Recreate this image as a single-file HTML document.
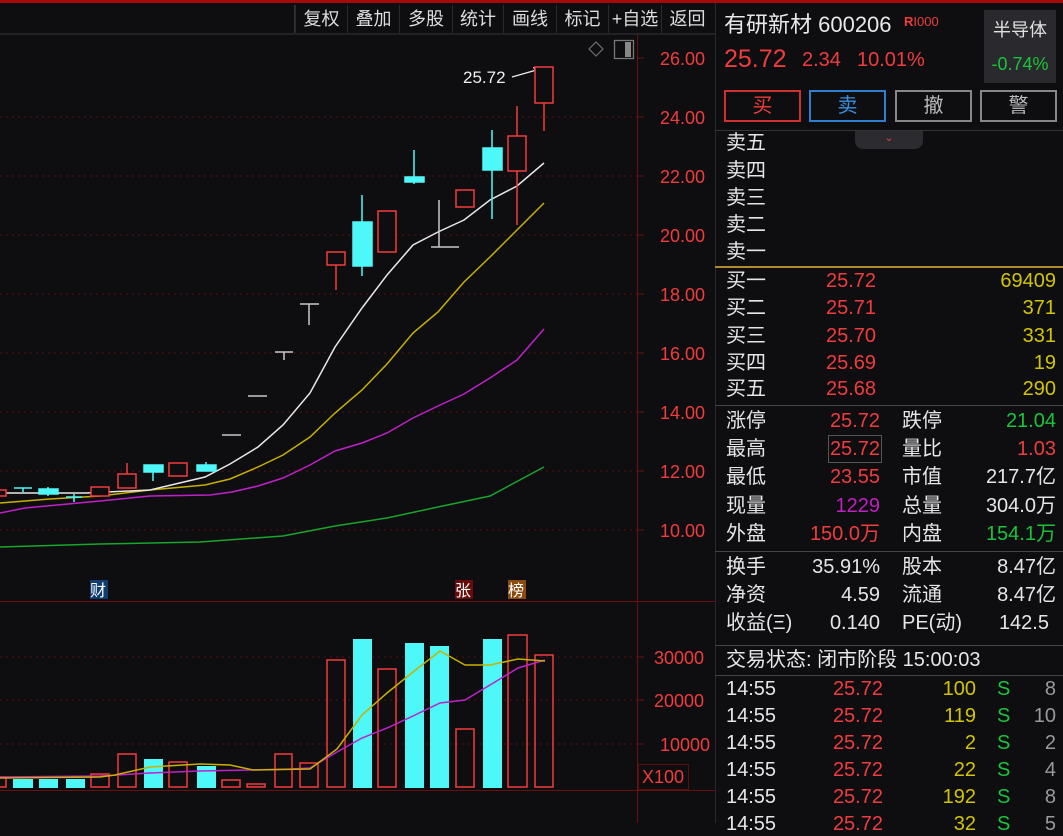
<!DOCTYPE html>
<html><head><meta charset="utf-8"><style>
*{margin:0;padding:0;box-sizing:border-box}
body{width:1063px;height:823px;background:#0e0e11;overflow:hidden;position:relative;font-family:"Liberation Sans","Noto Sans CJK SC",sans-serif;color:#e6e6e6}
.a{position:absolute;white-space:nowrap}
.r{color:#f03c3c}.g{color:#19c43a}.y{color:#d2c400}.w{color:#e6e6e6}.m{color:#c020c0}.gr{color:#9a9a9a}
.row{position:absolute;left:726px;font-size:20px;line-height:24px;height:24px;width:330px}
.row span{position:absolute;top:0}
.tb{position:absolute;top:5px;height:28px;font-size:18px;line-height:28px;color:#ddd;text-align:center;border-left:1px solid #2a2a2e}
.btn{position:absolute;top:90px;height:32px;font-size:20px;line-height:28px;text-align:center;border:2px solid}
</style></head><body>
<div class="a" style="left:0;top:0;width:1063px;height:3px;background:#a50b0b"></div>
<!-- toolbar -->
<div class="a" style="left:0;top:33px;width:715px;height:2px;background:#222226"></div>
<div class="a" style="left:294px;top:5px;width:1px;height:28px;background:#333"></div>
<div class="tb" style="left:295px;width:52px">复权</div>
<div class="tb" style="left:347px;width:52px">叠加</div>
<div class="tb" style="left:399px;width:53px">多股</div>
<div class="tb" style="left:452px;width:51px">统计</div>
<div class="tb" style="left:503px;width:53px">画线</div>
<div class="tb" style="left:556px;width:52px">标记</div>
<div class="tb" style="left:608px;width:53px">+自选</div>
<div class="tb" style="left:661px;width:52px">返回</div>
<div class="a" style="left:715px;top:3px;width:1px;height:820px;background:#2a2a2e"></div>

<svg class="a" style="left:0;top:0" width="715" height="823">
<g stroke="#5a0f0f" stroke-dasharray="2,4" stroke-width="1">
<line x1="0" y1="117" x2="637" y2="117"/><line x1="0" y1="176" x2="637" y2="176"/><line x1="0" y1="235" x2="637" y2="235"/><line x1="0" y1="294" x2="637" y2="294"/><line x1="0" y1="353" x2="637" y2="353"/><line x1="0" y1="412" x2="637" y2="412"/><line x1="0" y1="471" x2="637" y2="471"/><line x1="0" y1="530" x2="637" y2="530"/>
<line x1="0" y1="657" x2="637" y2="657"/><line x1="0" y1="700" x2="637" y2="700"/><line x1="0" y1="744" x2="637" y2="744"/>
</g>
<line x1="637.5" y1="35" x2="637.5" y2="823" stroke="#6a1010"/>
<line x1="0" y1="601.5" x2="715" y2="601.5" stroke="#6a1010"/>
<line x1="0" y1="790.5" x2="715" y2="790.5" stroke="#6a1010"/>
<g stroke="#6a1010"><line x1="638" y1="58" x2="644" y2="58"/><line x1="638" y1="117" x2="644" y2="117"/><line x1="638" y1="176" x2="644" y2="176"/><line x1="638" y1="235" x2="644" y2="235"/><line x1="638" y1="294" x2="644" y2="294"/><line x1="638" y1="353" x2="644" y2="353"/><line x1="638" y1="412" x2="644" y2="412"/><line x1="638" y1="471" x2="644" y2="471"/><line x1="638" y1="530" x2="644" y2="530"/><line x1="638" y1="657" x2="644" y2="657"/><line x1="638" y1="700" x2="644" y2="700"/><line x1="638" y1="744" x2="644" y2="744"/></g>
<rect x="638.5" y="764.5" width="50" height="25" fill="none" stroke="#5a0f0f"/>
<g fill="#f03c3c" font-size="18" font-family="Liberation Sans,sans-serif">
<text x="660" y="65">26.00</text><text x="660" y="124">24.00</text><text x="660" y="183">22.00</text><text x="660" y="242">20.00</text><text x="660" y="301">18.00</text><text x="660" y="360">16.00</text><text x="660" y="419">14.00</text><text x="660" y="478">12.00</text><text x="660" y="537">10.00</text>
<text x="654" y="664">30000</text><text x="654" y="707">20000</text><text x="660" y="751">10000</text><text x="642" y="783">X100</text>
</g>
<!-- icons -->
<path d="M596 42 L603 49 L596 56 L589 49 Z" fill="none" stroke="#666" stroke-width="1.3"/>
<rect x="614.5" y="40.5" width="19" height="18" fill="none" stroke="#777" stroke-width="1.3"/><rect x="625" y="42" width="6" height="15" fill="#888"/>
<text x="463" y="83" fill="#eee" font-size="17" font-family="Liberation Sans,sans-serif">25.72</text>
<path d="M512 77 L540 69" stroke="#eee" stroke-width="1.2"/><path d="M533 67 L542 68 L536 74" fill="#eee"/>
<!-- MA lines -->
<polyline fill="none" stroke="#18a52c" stroke-width="1.5" points="0,547 100,544 200,542 283,536 335,526 387,518 438,507 490,496 544,467"/>
<polyline fill="none" stroke="#c020c8" stroke-width="1.5" points="0,513 25,508 100,501 150,496 210,495 232,492 258,486 283,478 310,465 335,451 362,443 387,433 413,418 438,406 464,394 490,378 517,360 544,329"/>
<polyline fill="none" stroke="#c8b000" stroke-width="1.5" points="0,503 50,499 100,496 150,490 205,485 230,479 258,467 283,455 310,437 335,413 362,390 387,364 413,333 438,312 464,282 490,257 517,230 544,203"/>
<polyline fill="none" stroke="#e8e8e8" stroke-width="1.5" points="0,493 86,493 150,490 205,477 230,464 258,447 283,425 310,393 335,347 362,308 387,275 413,245 438,232 464,220 490,200 517,186 544,163"/>
<!-- candles -->
<g stroke="#f03c3c" fill="#0e0e11" stroke-width="1.5">
<rect x="-2" y="490" width="8" height="6"/>
<rect x="91" y="487" width="18" height="9"/>
<line x1="127" y1="463" x2="127" y2="474"/><rect x="118" y="474" width="18" height="14"/>
<rect x="169" y="463" width="18" height="13"/>
<line x1="336" y1="265" x2="336" y2="290"/><rect x="327" y="252" width="18" height="13"/>
<rect x="378" y="211" width="18" height="41"/>
<rect x="456" y="190" width="18" height="17"/>
<line x1="517" y1="106" x2="517" y2="136"/><line x1="517" y1="171" x2="517" y2="225"/><rect x="508" y="136" width="18" height="35"/>
<line x1="544" y1="103" x2="544" y2="131"/><rect x="535" y="67" width="18" height="36"/>
</g>
<g stroke="#4ef8f8" fill="#4ef8f8" stroke-width="1.5">
<line x1="14" y1="488" x2="32" y2="488"/><line x1="23" y1="488" x2="23" y2="492"/>
<rect x="39" y="489" width="19" height="5"/><line x1="48" y1="487" x2="48" y2="496"/>
<line x1="66" y1="497" x2="82" y2="497"/><line x1="74" y1="494" x2="74" y2="502"/>
<rect x="144" y="465" width="19" height="7"/><line x1="153" y1="472" x2="153" y2="481"/>
<rect x="197" y="465" width="19" height="6"/><line x1="206" y1="462" x2="206" y2="471"/>
<rect x="353" y="222" width="19" height="44"/><line x1="362" y1="195" x2="362" y2="276"/>
<rect x="405" y="177" width="19" height="5"/><line x1="414" y1="150" x2="414" y2="184"/>
<rect x="483" y="148" width="19" height="22"/><line x1="492" y1="130" x2="492" y2="219"/>
</g>
<g stroke="#c8c8c8" stroke-width="1.5">
<line x1="222" y1="435" x2="241" y2="435"/><line x1="248" y1="396" x2="267" y2="396"/>
<line x1="275" y1="352" x2="293" y2="352"/><line x1="284" y1="352" x2="284" y2="360"/>
<line x1="300" y1="304" x2="319" y2="304"/><line x1="309" y1="304" x2="309" y2="325"/>
<line x1="439" y1="200" x2="439" y2="247"/><line x1="431" y1="247" x2="459" y2="247"/>
</g>
<!-- event tags -->
<rect x="90" y="580" width="18" height="19" fill="#103c70"/><text x="90" y="596" fill="#fff" font-size="16" font-family="Noto Sans CJK SC,sans-serif">财</text>
<rect x="455" y="580" width="18" height="19" fill="#6a0a0a"/><text x="455" y="596" fill="#fff" font-size="16" font-family="Noto Sans CJK SC,sans-serif">张</text>
<rect x="508" y="580" width="18" height="19" fill="#8a4a10"/><text x="508" y="596" fill="#fff" font-size="16" font-family="Noto Sans CJK SC,sans-serif">榜</text>
<!-- volume -->
<g stroke="#f03c3c" fill="none" stroke-width="1.5">
<rect x="-2" y="777" width="8" height="10"/><rect x="91" y="774" width="18" height="13"/><rect x="118" y="754" width="18" height="33"/><rect x="169" y="762" width="18" height="25"/><rect x="222" y="780" width="18" height="7"/><rect x="247" y="784" width="18" height="3"/><rect x="275" y="754" width="17" height="33"/><rect x="300" y="763" width="18" height="24"/><rect x="327" y="660" width="18" height="127"/><rect x="378" y="669" width="18" height="118"/><rect x="456" y="729" width="18" height="58"/><rect x="508" y="635" width="19" height="152"/><rect x="535" y="655" width="18" height="132"/>
</g>
<g fill="#4ef8f8">
<rect x="13" y="779" width="20" height="9"/><rect x="39" y="779" width="19" height="9"/><rect x="66" y="779" width="19" height="9"/><rect x="144" y="759" width="19" height="29"/><rect x="197" y="766" width="19" height="22"/><rect x="353" y="639" width="19" height="149"/><rect x="405" y="643" width="19" height="145"/><rect x="430" y="646" width="19" height="142"/><rect x="483" y="639" width="19" height="149"/>
</g>
<polyline fill="none" stroke="#c020c8" stroke-width="1.5" points="0,777 100,776 150,773 200,771 250,770 290,769 310,768 337,752 362,738 387,728 413,716 440,703 465,700 490,685 518,668 545,660"/>
<polyline fill="none" stroke="#c8b000" stroke-width="1.5" points="0,778 100,777 115,775 150,767 200,764 230,765 253,770 310,769 337,749 362,715 387,693 413,672 440,651 465,665 490,665 518,659 545,661"/>
</svg>

<!-- right panel -->
<div class="a" style="left:724px;top:10px;font-size:22px;line-height:30px;color:#e8e8e8">有研新材 600206</div>
<div class="a" style="left:904px;top:14px;font-size:13px;color:#f03c3c;font-weight:bold">R<span style="font-weight:normal">I000</span></div>
<div class="a" style="left:984px;top:10px;width:72px;height:73px;background:#2a2a2e"></div>
<div class="a" style="left:984px;top:16px;width:72px;text-align:center;font-size:18px;color:#e0e0e0">半导体</div>
<div class="a g" style="left:984px;top:54px;width:72px;text-align:center;font-size:18px">-0.74%</div>
<div class="a r" style="left:724px;top:45px;font-size:25px">25.72</div>
<div class="a r" style="left:802px;top:49px;font-size:20px">2.34</div>
<div class="a r" style="left:857px;top:49px;font-size:20px">10.01%</div>
<div class="btn r" style="left:724px;width:77px;border-color:#d03030">买</div>
<div class="btn" style="left:809px;width:77px;border-color:#2f7fd0;color:#3a90e0">卖</div>
<div class="btn" style="left:895px;width:77px;border-color:#888;color:#bbb">撤</div>
<div class="btn" style="left:980px;width:77px;border-color:#888;color:#bbb">警</div>
<div class="a" style="left:715px;top:130px;width:348px;height:1px;background:#333"></div>
<div class="a" style="left:855px;top:131px;width:68px;height:18px;background:#2c2c30;border-radius:0 0 8px 8px;color:#e04040;text-align:center;font-size:11px;line-height:14px">&#8964;</div>

<div class="row" style="top:131px">卖五</div>
<div class="row" style="top:159px">卖四</div>
<div class="row" style="top:186px">卖三</div>
<div class="row" style="top:213px">卖二</div>
<div class="row" style="top:240px">卖一</div>
<div class="a" style="left:715px;top:266px;width:348px;height:2px;background:#b08a30"></div>
<div class="row" style="top:269px">买一<span class="r" style="left:100px">25.72</span><span class="y" style="right:0">69409</span></div>
<div class="row" style="top:296px">买二<span class="r" style="left:100px">25.71</span><span class="y" style="right:0">371</span></div>
<div class="row" style="top:324px">买三<span class="r" style="left:100px">25.70</span><span class="y" style="right:0">331</span></div>
<div class="row" style="top:351px">买四<span class="r" style="left:100px">25.69</span><span class="y" style="right:0">19</span></div>
<div class="row" style="top:377px">买五<span class="r" style="left:100px">25.68</span><span class="y" style="right:0">290</span></div>
<div class="a" style="left:715px;top:405px;width:348px;height:1px;background:#444"></div>
<div class="row" style="top:409px">涨停<span class="r" style="right:176px">25.72</span><span style="left:176px">跌停</span><span class="g" style="right:0">21.04</span></div>
<div class="row" style="top:437px">最高<span class="r" style="right:176px;outline:1px solid #555;outline-offset:1px">25.72</span><span style="left:176px">量比</span><span class="r" style="right:0">1.03</span></div>
<div class="row" style="top:465px">最低<span class="r" style="right:176px">23.55</span><span style="left:176px">市值</span><span style="right:0">217.7亿</span></div>
<div class="row" style="top:494px">现量<span class="m" style="right:176px">1229</span><span style="left:176px">总量</span><span style="right:0">304.0万</span></div>
<div class="row" style="top:522px">外盘<span class="r" style="right:176px">150.0万</span><span style="left:176px">内盘</span><span class="g" style="right:0">154.1万</span></div>
<div class="a" style="left:715px;top:551px;width:348px;height:1px;background:#444"></div>
<div class="row" style="top:555px">换手<span style="right:176px">35.91%</span><span style="left:176px">股本</span><span style="right:0">8.47亿</span></div>
<div class="row" style="top:583px">净资<span style="right:176px">4.59</span><span style="left:176px">流通</span><span style="right:0">8.47亿</span></div>
<div class="row" style="top:611px">收益(Ξ)<span style="right:176px">0.140</span><span style="left:176px">PE(动)</span><span style="right:7px">142.5</span></div>
<div class="a" style="left:715px;top:645px;width:348px;height:1px;background:#444"></div>
<div class="row" style="top:648px">交易状态: 闭市阶段 15:00:03</div>
<div class="a" style="left:715px;top:675px;width:348px;height:1px;background:#444"></div>
<div class="row" style="top:677px">14:55<span class="r" style="right:173px">25.72</span><span class="y" style="right:80px">100</span><span class="g" style="left:271px">S</span><span class="gr" style="right:0">8</span></div>
<div class="row" style="top:704px">14:55<span class="r" style="right:173px">25.72</span><span class="y" style="right:80px">119</span><span class="g" style="left:271px">S</span><span class="gr" style="right:0">10</span></div>
<div class="row" style="top:731px">14:55<span class="r" style="right:173px">25.72</span><span class="y" style="right:80px">2</span><span class="g" style="left:271px">S</span><span class="gr" style="right:0">2</span></div>
<div class="row" style="top:758px">14:55<span class="r" style="right:173px">25.72</span><span class="y" style="right:80px">22</span><span class="g" style="left:271px">S</span><span class="gr" style="right:0">4</span></div>
<div class="row" style="top:785px">14:55<span class="r" style="right:173px">25.72</span><span class="y" style="right:80px">192</span><span class="g" style="left:271px">S</span><span class="gr" style="right:0">8</span></div>
<div class="row" style="top:812px">14:55<span class="r" style="right:173px">25.72</span><span class="y" style="right:80px">32</span><span class="g" style="left:271px">S</span><span class="gr" style="right:0">5</span></div>
</body></html>
